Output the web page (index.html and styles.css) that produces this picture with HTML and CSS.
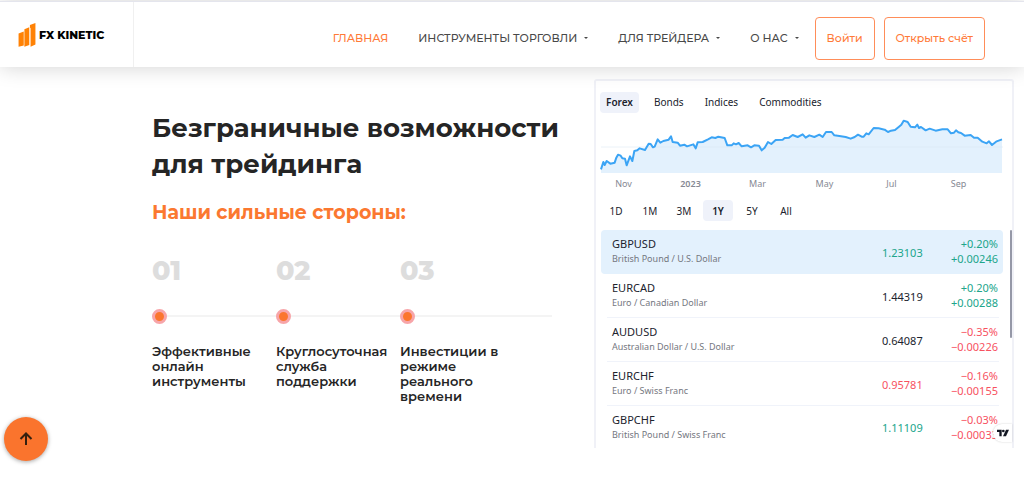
FILE: index.html
```html
<!DOCTYPE html>
<html lang="ru">
<head>
<meta charset="utf-8">
<meta name="viewport" content="width=device-width, initial-scale=1">
<title>FX Kinetic</title>
<link rel="stylesheet" href="styles.css">
</head>
<body>
<header class="header">
  <a class="logo" href="#">
    <svg class="logo-mark" viewBox="0 0 54 74" aria-hidden="true">
      <path d="M1 32 17 26V69L1 73Z"/>
      <path d="M19 19 34 13V68L19 73Z"/>
      <path d="M36 6 53 0V66L38 73V16L36 14Z"/>
    </svg>
    <span>FX KINETIC</span>
  </a>
  <nav class="nav">
    <a class="nav-item active" href="#">ГЛАВНАЯ</a>
    <button class="nav-item" type="button">ИНСТРУМЕНТЫ ТОРГОВЛИ<span class="caret"></span></button>
    <button class="nav-item" type="button">ДЛЯ ТРЕЙДЕРА<span class="caret"></span></button>
    <button class="nav-item" type="button">О НАС<span class="caret"></span></button>
    <div class="account">
      <a class="btn" href="#">Войти</a>
      <a class="btn" href="#">Открыть счёт</a>
    </div>
  </nav>
</header>

<main class="main">
  <section class="hero">
    <h1 class="title">Безграничные возможности для трейдинга</h1>
    <h2 class="subtitle">Наши сильные стороны:</h2>
    <ol class="steps">
      <li class="step"><span class="num">01</span><span class="track"><span class="dot"></span></span><span class="label">Эффективные онлайн инструменты</span></li>
      <li class="step"><span class="num">02</span><span class="track"><span class="dot"></span></span><span class="label">Круглосуточная служба поддержки</span></li>
      <li class="step last"><span class="num">03</span><span class="track"><span class="dot"></span></span><span class="label">Инвестиции в режиме реального времени</span></li>
    </ol>
  </section>

  <section class="widget">
    <div class="tabs">
      <button class="tab selected" type="button">Forex</button>
      <button class="tab" type="button">Bonds</button>
      <button class="tab" type="button">Indices</button>
      <button class="tab" type="button">Commodities</button>
    </div>
    <svg class="chart" viewBox="0 0 1206 174" preserveAspectRatio="none" aria-hidden="true">
      <path class="area" d="M0 163 7 141 11 150 17 138 28 146 41 143 46 128 51 119 59 122 64 130 72 131 77 151 87 124 94 138 100 108 109 106 116 100 132 105 143 86 149 87 156 97 161 95 170 73 178 83 187 78 203 74 210 64 215 81 230 83 237 92 250 89 258 94 277 88 284 100 290 82 305 81 321 73 332 67 343 69 352 65 371 69 379 91 392 91 398 85 405 88 413 84 422 94 440 91 450 97 460 91 474 92 482 106 491 98 501 81 511 87 524 75 545 74 551 69 564 68 575 60 590 66 605 58 614 68 625 61 640 66 655 59 665 66 675 51 692 51 700 61 715 63 734 66 749 71 761 66 771 59 782 65 788 65 796 55 803 58 818 39 833 40 851 44 861 51 870 47 882 45 894 35 901 29 908 17 920 21 929 35 942 37 949 29 954 39 960 36 974 46 986 41 1004 47 1024 43 1040 43 1050 55 1059 53 1065 46 1072 52 1080 54 1091 62 1109 60 1119 68 1130 68 1144 80 1157 85 1164 79 1173 90 1187 79 1203 73V174H0Z"/>
      <path class="gridline" d="M0 96H1206"/>
      <path class="line" d="M0 163 7 141 11 150 17 138 28 146 41 143 46 128 51 119 59 122 64 130 72 131 77 151 87 124 94 138 100 108 109 106 116 100 132 105 143 86 149 87 156 97 161 95 170 73 178 83 187 78 203 74 210 64 215 81 230 83 237 92 250 89 258 94 277 88 284 100 290 82 305 81 321 73 332 67 343 69 352 65 371 69 379 91 392 91 398 85 405 88 413 84 422 94 440 91 450 97 460 91 474 92 482 106 491 98 501 81 511 87 524 75 545 74 551 69 564 68 575 60 590 66 605 58 614 68 625 61 640 66 655 59 665 66 675 51 692 51 700 61 715 63 734 66 749 71 761 66 771 59 782 65 788 65 796 55 803 58 818 39 833 40 851 44 861 51 870 47 882 45 894 35 901 29 908 17 920 21 929 35 942 37 949 29 954 39 960 36 974 46 986 41 1004 47 1024 43 1040 43 1050 55 1059 53 1065 46 1072 52 1080 54 1091 62 1109 60 1119 68 1130 68 1144 80 1157 85 1164 79 1173 90 1187 79 1203 73"/>
    </svg>
    <div class="axis"><span>Nov</span><b>2023</b><span>Mar</span><span>May</span><span>Jul</span><span>Sep</span></div>
    <div class="ranges">
      <button class="range" type="button">1D</button>
      <button class="range" type="button">1M</button>
      <button class="range" type="button">3M</button>
      <button class="range selected" type="button">1Y</button>
      <button class="range" type="button">5Y</button>
      <button class="range" type="button">All</button>
    </div>
    <div class="list">
      <table class="quotes">
        <tbody>
        <tr class="current"><td><div class="symbol">GBPUSD</div><div class="desc">British Pound / U.S. Dollar</div></td><td class="price up">1.23103</td><td class="change up">+0.20%<br>+0.00246</td></tr>
        <tr><td><div class="symbol">EURCAD</div><div class="desc">Euro / Canadian Dollar</div></td><td class="price">1.44319</td><td class="change up">+0.20%<br>+0.00288</td></tr>
        <tr><td><div class="symbol">AUDUSD</div><div class="desc">Australian Dollar / U.S. Dollar</div></td><td class="price">0.64087</td><td class="change down">−0.35%<br>−0.00226</td></tr>
        <tr><td><div class="symbol">EURCHF</div><div class="desc">Euro / Swiss Franc</div></td><td class="price down">0.95781</td><td class="change down">−0.16%<br>−0.00155</td></tr>
        <tr><td><div class="symbol">GBPCHF</div><div class="desc">British Pound / Swiss Franc</div></td><td class="price up">1.11109</td><td class="change down">−0.03%<br>−0.00033</td></tr>
        </tbody>
      </table>
      <span class="thumb"></span>
      <a class="badge" href="#" aria-label="TradingView">
        <svg viewBox="0 0 36 22" aria-hidden="true"><path d="M0 1H14V21H7V8H0Z"/><circle cx="19" cy="5" r="4"/><path d="M27 1H36L27 21H18Z"/></svg>
      </a>
    </div>
  </section>
</main>

<button class="to-top" type="button" aria-label="Наверх">
  <svg viewBox="0 0 14 14" aria-hidden="true"><path d="M7 13V1.500M1.500 7 7 1.500 12.500 7"/></svg>
</button>
</body>
</html>
```
FILE: styles.css
```css
* { box-sizing: border-box; }
body {
  margin: 0;
  background: #fff;
  color: #252525;
  font-family: Montserrat, Inter, "Noto Sans", sans-serif;
}
a { color: inherit; text-decoration: none; }
button { margin: 0; padding: 0; border: 0; background: none; color: inherit; font: inherit; cursor: pointer; }

.header {
  position: relative;
  display: flex;
  justify-content: space-between;
  height: 66px;
  margin-top: 1px;
  border-top: 1px solid #e4e5ed;
  background: #fff;
  box-shadow: 0 0 20px rgba(0, 0, 0, .18);
}
.logo {
  display: flex;
  align-items: center;
  gap: 3px;
  width: 134px;
  padding-left: 18px;
  border-right: 1px solid #f0f0f0;
  color: #000;
  font-size: 11px;
  font-weight: 800;
  white-space: nowrap;
}
.logo-mark { width: 18px; height: 24px; fill: #ff8205; }
.nav { display: flex; align-items: center; gap: 30px; padding: 7px 39px 0 0; }
.nav-item {
  display: flex;
  align-items: center;
  gap: 7px;
  color: #484848;
  font-size: 11px;
  font-weight: 500;
  line-height: 16px;
  white-space: nowrap;
}
.nav-item.active { color: #ff7a38; }
.caret { border: 2px solid transparent; border-top-color: #484848; border-bottom: 0; }
.account { display: flex; gap: 9px; margin-left: -14px; }
.btn {
  padding: 12px 11px;
  border: 1px solid #ff8d59;
  border-radius: 4px;
  color: #ff7a38;
  font-size: 11px;
  font-weight: 500;
  line-height: 17px;
  white-space: nowrap;
}

.main {
  display: grid;
  grid-template-columns: minmax(0, 1fr) 420px;
  gap: 22px;
  padding: 12px 10px 30px 152px;
}
.hero { padding-top: 31px; }
.title { margin: 0; font-size: 26px; font-weight: 700; line-height: 36px; }
.subtitle { margin: 19px 0 0; color: #fb7830; font-size: 19px; font-weight: 700; line-height: 24px; }
.steps { display: grid; grid-template-columns: 124px 124px 1fr; margin: 30px 20px 0 0; padding: 0; list-style: none; }
.step { display: flex; flex-direction: column; }
.num { color: #ddd; font-size: 27px; font-weight: 800; line-height: 32px; }
.track {
  display: flex;
  align-items: center;
  height: 16px;
  margin: 21px 0 20px;
  background: linear-gradient(#f4f4f4, #f4f4f4) center / 100% 2px no-repeat;
}
.dot { width: 15px; height: 15px; border: 3px solid #f7a5a9; border-radius: 50%; background: #fb762e; }
.label { font-size: 13px; font-weight: 600; line-height: 15px; }
.last .label { max-width: 105px; }

.widget {
  border: 2px solid #f0f1f7;
  border-bottom: 0;
  border-radius: 3px 3px 0 0;
  background: #fff;
  color: #20232d;
  font-family: "Trebuchet MS", "Noto Sans", sans-serif;
  font-size: 11px;
  padding: 11px 0 0 4px;
}
.tabs { display: flex; gap: 7px; }
.tab { height: 21px; padding: 0 6px 1px; border-radius: 4px; font-size: 10px; line-height: 18px; }
.tab + .tab { padding-left: 8px; }
.selected { background: #eff2fa; font-weight: 600; }
.chart { display: block; width: calc(100% - 10px); height: 58px; margin: 2px 0 0 1px; overflow: visible; }
.area { fill: #e3f1fd; }
.line { fill: none; stroke: #3ba4f5; stroke-width: 2; stroke-linejoin: round; vector-effect: non-scaling-stroke; }
.gridline { fill: none; stroke: #d9e8f4; stroke-width: 1; vector-effect: non-scaling-stroke; opacity: .5; }
.axis {
  display: grid;
  grid-template-columns: repeat(6, 1fr);
  margin: 0 20px 0 -10px;
  padding-top: 4px;
  color: #868993;
  font-size: 9px;
  line-height: 13px;
  text-align: center;
}
.axis b { font-weight: 600; }
.ranges { display: flex; gap: 4px; margin: 10px 0 0 1px; }
.range { width: 30px; height: 21px; border-radius: 4px; font-size: 10px; line-height: 20px; }
.list { position: relative; margin: 9px 0 0 1px; padding-right: 9px; }
.quotes { width: 100%; border-collapse: separate; border-spacing: 0; }
.quotes tr { background: linear-gradient(#f0f3fa, #f0f3fa) 6px 100% / calc(100% - 10px) 1px no-repeat; }
.quotes tr.current { background: none; }
.quotes tr:last-child { background: none; }
.quotes td { height: 44px; padding: 0 0 2px 11px; }
.quotes tr:last-child td { height: 42px; padding-bottom: 0; }
.current td { background: #e3f1fd; }
.current td:first-child { border-radius: 4px 0 0 4px; }
.current td:last-child { border-radius: 0 4px 4px 0; }
.symbol { font-size: 11px; line-height: 15px; }
.desc { color: #747780; font-size: 9px; line-height: 15px; }
.quotes .price { width: 60px; padding-bottom: 0; font-size: 11px; }
.quotes .change { width: 72px; padding-right: 5px; font-size: 11px; line-height: 15px; text-align: right; }
.up { color: #20a58b; }
.down { color: #f7525f; }
.thumb { position: absolute; top: 0; right: 0; width: 2px; height: 108px; border-radius: 1px; background: #9598a7; }
.badge {
  position: absolute;
  right: 0;
  bottom: 6px;
  display: flex;
  align-items: center;
  justify-content: center;
  width: 19px;
  height: 18px;
  border-radius: 9px 0 0 9px;
  background: #fff;
  box-shadow: 0 0 2px rgba(0, 0, 0, .2);
}
.badge svg { width: 12px; height: 8px; fill: #131722; }

.to-top {
  position: fixed;
  bottom: 17px;
  left: 4px;
  display: flex;
  align-items: center;
  justify-content: center;
  width: 44px;
  height: 44px;
  border-radius: 50%;
  background: #fa742d;
  box-shadow: 0 1px 4px rgba(0, 0, 0, .35);
}
.to-top svg { width: 14px; height: 14px; fill: none; stroke: #35200f; stroke-width: 2; }
```
